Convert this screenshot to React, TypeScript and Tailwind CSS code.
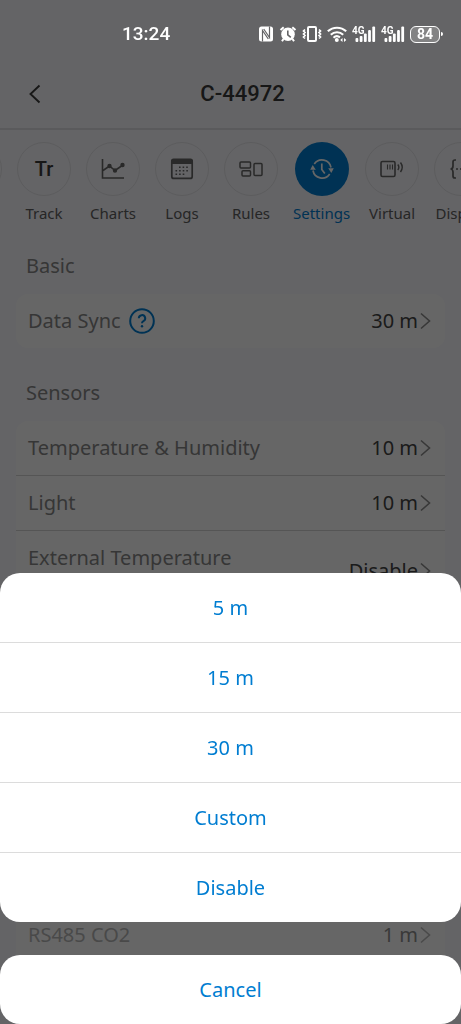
import type { ReactNode } from "react";

interface Tab {
  label: string;
  icon: ReactNode;
  active?: boolean;
}

interface SensorRow {
  label: string;
  value: string;
  tall?: boolean;
}

const OPTIONS = ["5 m", "15 m", "30 m", "Custom", "Disable"];

const SENSORS: SensorRow[] = [
  { label: "Temperature & Humidity", value: "10 m" },
  { label: "Light", value: "10 m" },
  { label: "External Temperature", value: "Disable", tall: true },
];

const TABS: Tab[] = [
  {
    label: "Track",
    icon: <span className="font-['Roboto',sans-serif] text-xl font-medium text-[#3a3a3a]">Tr</span>,
  },
  { label: "Charts", icon: <ChartIcon /> },
  { label: "Logs", icon: <CalendarIcon /> },
  { label: "Rules", icon: <RulesIcon /> },
  { label: "Settings", icon: <SyncClockIcon />, active: true },
  { label: "Virtual", icon: <VirtualIcon /> },
  { label: "Display", icon: <BracesIcon /> },
];

function ChartIcon() {
  return (
    <svg width="24" height="22" viewBox="0 0 24 22" fill="none" stroke="currentColor" strokeWidth="1.6">
      <path d="M1.5 1v19h21.5" />
      <path d="M2 12.5L8.5 8l5.5 4.5L22 7" />
      <circle cx="8.5" cy="8" r="1.4" fill="currentColor" />
      <circle cx="14" cy="12.5" r="1.4" fill="currentColor" />
      <circle cx="21.5" cy="7" r="1.4" fill="currentColor" />
    </svg>
  );
}

function CalendarIcon() {
  return (
    <svg width="24" height="22" viewBox="0 0 24 22" fill="none">
      <rect x="1.8" y="1.8" width="20.4" height="18.6" rx="2" stroke="currentColor" strokeWidth="1.7" />
      <path d="M1 3a2.5 2.5 0 0 1 2.5-2.5h17A2.5 2.5 0 0 1 23 3v3H1z" fill="currentColor" />
      <path
        d="M9 9.3h10.5M5.5 12.8h14M5.5 16.3h10.5"
        stroke="currentColor"
        strokeWidth="1.6"
        strokeDasharray="1.6 2"
      />
    </svg>
  );
}

function RulesIcon() {
  return (
    <svg width="24" height="16" viewBox="0 0 24 16" fill="none" stroke="currentColor" strokeWidth="1.5">
      <rect x="1" y="1" width="10.5" height="6" rx="1" />
      <rect x="3" y="9.7" width="8.5" height="5.3" rx="1" />
      <rect x="15" y="2.5" width="8" height="12" rx="1" />
    </svg>
  );
}

function SyncClockIcon() {
  return (
    <svg width="24" height="22" viewBox="0 0 24 22" fill="none" stroke="currentColor" strokeWidth="1.7">
      <path d="M4.3 6A9.2 9.2 0 0 1 21 9.5" />
      <path d="M19.7 16A9.2 9.2 0 0 1 3 12.5" />
      <path d="M18.2 10.3h5.6L21.3 15z" fill="currentColor" stroke="none" />
      <path d="M.2 11.7h5.6L2.7 7z" fill="currentColor" stroke="none" />
      <path d="M11.8 5.5v6l3 4" />
    </svg>
  );
}

function VirtualIcon() {
  return (
    <svg width="24" height="18" viewBox="0 0 24 18" fill="none" stroke="currentColor" strokeWidth="1.6">
      <rect x="1" y="1.5" width="14" height="15" rx="1.5" />
      <path d="M7.5 4.5v5M10 4.5v5M12.5 4.5v5" strokeWidth="1.1" />
      <path d="M17.8 4.5a4.5 4.5 0 0 1 0 5.5M20.5 2.5a8 8 0 0 1 0 9.5" strokeWidth="1.4" />
    </svg>
  );
}

function BracesIcon() {
  return (
    <svg width="24" height="20" viewBox="0 0 24 20" fill="none" stroke="currentColor" strokeWidth="1.7">
      <path d="M7 1H6a2 2 0 0 0-2 2v4c0 1.5-1 3-2.5 3C3 10 4 11.5 4 13v4a2 2 0 0 0 2 2h1" />
      <path d="M17 1h1a2 2 0 0 1 2 2v4c0 1.5 1 3 2.5 3-1.5 0-2.5 1.5-2.5 3v4a2 2 0 0 1-2 2h-1" />
      <path d="M7 10h2M11 10h2M15 10h2" />
    </svg>
  );
}

function Chevron() {
  return (
    <svg width="11" height="18" viewBox="0 0 11 18" fill="none" stroke="#8c8c8c" strokeWidth="1.6">
      <path d="M1 1.5L9.5 9 1 16.5" />
    </svg>
  );
}

function NfcIcon() {
  return (
    <svg width="16" height="16" viewBox="0 0 16 16" fill="none">
      <rect x="1" y="0.5" width="14" height="15" rx="2.5" fill="currentColor" />
      <path d="M4.5 15.5V4.5L10.3 13" stroke="#646466" strokeWidth="1.2" />
      <path d="M11.5.5v11L5.7 3" stroke="#646466" strokeWidth="1.2" />
    </svg>
  );
}

function AlarmIcon() {
  return (
    <svg width="18" height="16" viewBox="0 0 18 16">
      <circle cx="9" cy="8.3" r="6.8" fill="currentColor" />
      <path
        d="M1.5 4L4.7 1.2M16.5 4l-3.2-2.800M4.5 13L3 15.300M13.500 13l1.500 2.300"
        stroke="currentColor"
        strokeWidth="2"
      />
      <path d="M8.8 4.5v4.3l3 2.5" stroke="#646466" strokeWidth="1.6" fill="none" />
    </svg>
  );
}

function VibrateIcon() {
  return (
    <svg width="20" height="16" viewBox="0 0 20 16" fill="none" stroke="currentColor" strokeWidth="2">
      <rect x="6" y="1" width="8" height="14" rx="1" />
      <path d="M3 3.5L1.5 5 3 6.5 1.5 8 3 9.5 1.5 11 3 12.5" strokeWidth="1.7" />
      <path d="M17 3.5L18.5 5 17 6.5 18.5 8 17 9.5l1.5 1.5-1.5 1.5" strokeWidth="1.7" />
    </svg>
  );
}

function WifiIcon() {
  return (
    <svg width="20" height="16" viewBox="0 0 20 16" fill="none" stroke="currentColor" strokeWidth="2.1">
      <path d="M.8 5.3a13.5 13.5 0 0 1 18.4 0" />
      <path d="M3.8 8.7a9 9 0 0 1 12.4 0" />
      <path d="M6.5 11.7a5 5 0 0 1 6.5-.3" />
      <circle cx="9.8" cy="14" r="2" fill="currentColor" stroke="none" />
      <path d="M15.5 12l-2.3 2 2.3 2zM17 12l2.3 2-2.3 2z" fill="currentColor" stroke="none" />
    </svg>
  );
}

function SignalIcon() {
  return (
    <span className="relative block">
      <svg width="24" height="16" viewBox="0 0 24 16" fill="currentColor">
        <rect x="3.5" y="12" width="2.8" height="4" rx="1" />
        <rect x="7.7" y="10" width="2.8" height="6" rx="1" />
        <rect x="11.9" y="7.5" width="2.8" height="8.5" rx="1" />
        <rect x="16.1" y="4" width="2.8" height="12" rx="1" />
        <rect x="20.3" y="0.5" width="2.8" height="15.5" rx="1" />
      </svg>
      <span className="absolute top-0 left-0 text-[10px] leading-[9px] font-bold">4G</span>
    </span>
  );
}

function StatusBar() {
  return (
    <div className="relative z-20 flex h-[68px] items-center justify-between pr-[18px] pl-[122px] font-['Roboto',sans-serif] text-white">
      <span className="text-[19px] font-medium">13:24</span>
      <div className="flex items-center gap-[5px]">
        <NfcIcon />
        <AlarmIcon />
        <VibrateIcon />
        <WifiIcon />
        <SignalIcon />
        <SignalIcon />
        <div className="flex items-center gap-px">
          <span className="flex h-[17px] w-[30px] items-center justify-center rounded-md border border-white bg-white/20 text-sm leading-none font-bold">
            84
          </span>
          <span className="h-1 w-0.5 rounded-r bg-white" />
        </div>
      </div>
    </div>
  );
}

function Row({ label, value, tall, children }: SensorRow & { children?: ReactNode }) {
  return (
    <button
      type="button"
      className={`flex w-full justify-between pr-3.5 pl-3 text-left ${tall ? "h-[80px]" : "h-[54px]"}`}
    >
      <span className="flex h-[54px] items-center gap-2 text-[#888]">
        {label}
        {children}
      </span>
      <span className="flex items-center gap-0.5 self-center text-[#444]">
        {value}
        <Chevron />
      </span>
    </button>
  );
}

export default function App() {
  return (
    <div className="relative flex min-h-screen flex-col overflow-hidden bg-[#fafafe] font-['Noto_Sans',sans-serif] text-xl">
      <StatusBar />

      <header className="grid h-[62px] grid-cols-[1fr_auto_1fr] items-center border-b-2 border-[#e2e2e6] pr-1 pb-2 pl-7">
        <button type="button" aria-label="Back" className="w-fit text-[#3a3a3a]">
          <svg width="14" height="20" viewBox="0 0 14 20" fill="none" stroke="currentColor" strokeWidth="1.9">
            <path d="M11.5 1.5L2.5 10l9 8.5" />
          </svg>
        </button>
        <h1 className="font-['Roboto',sans-serif] text-[22px] font-medium text-[#3a3a3a]">C-44972</h1>
      </header>

      <nav className="-ml-[52px] flex gap-[15px] pt-3">
        <span className="size-[54px] shrink-0 rounded-full border border-[#e6e6ea]" />
        {TABS.map((tab) => (
          <a
            key={tab.label}
            href="#"
            className={`flex min-w-[54px] shrink-0 flex-col items-center gap-[5px] ${tab.active ? "text-[#007dd1]" : "text-[#606060]"}`}
          >
            <span
              className={`flex size-[54px] items-center justify-center rounded-full ${
                tab.active ? "bg-[#007dd1] text-white" : "border border-[#e6e6ea] text-[#666]"
              }`}
            >
              {tab.icon}
            </span>
            <span className="text-[15px] leading-6">{tab.label}</span>
          </a>
        ))}
      </nav>

      <main className="flex grow flex-col px-4">
        <h2 className="mt-[25px] ml-2.5 leading-8 text-[#888]">Basic</h2>
        <section className="mt-3 rounded-xl bg-white">
          <Row label="Data Sync" value="30 m">
            <svg width="26" height="26" viewBox="0 0 26 26" fill="none" stroke="#007dd1" strokeWidth="2">
              <circle cx="13" cy="13" r="11.8" />
              <path d="M9.8 10.3a3.2 3.2 0 1 1 4.6 2.9c-1 .5-1.4 1-1.4 2.1" />
              <circle cx="13" cy="18.3" r="1.2" fill="#007dd1" stroke="none" />
            </svg>
          </Row>
        </section>

        <h2 className="mt-[29px] ml-2.5 leading-8 text-[#888]">Sensors</h2>
        <section className="mt-3 flex grow flex-col rounded-t-xl bg-white pb-[62px]">
          {SENSORS.map((row) => (
            <div key={row.label} className="border-b border-[#d4d4d4]">
              <Row {...row} />
            </div>
          ))}
          <div className="mt-auto opacity-60">
            <Row label="RS485 CO2" value="1 m" />
          </div>
        </section>
      </main>

      <div className="fixed inset-0 z-10 flex flex-col justify-end gap-[33px] bg-black/60">
        <div role="menu" className="flex flex-col divide-y divide-[#dcdcdc] overflow-hidden rounded-[20px] bg-white text-[#007dd1]">
          {OPTIONS.map((option) => (
            <button key={option} type="button" role="menuitem" className="h-[70px] last:h-[69px]">
              {option}
            </button>
          ))}
        </div>
        <button type="button" className="h-[69px] rounded-[20px] bg-white text-[#007dd1]">
          Cancel
        </button>
      </div>
    </div>
  );
}
